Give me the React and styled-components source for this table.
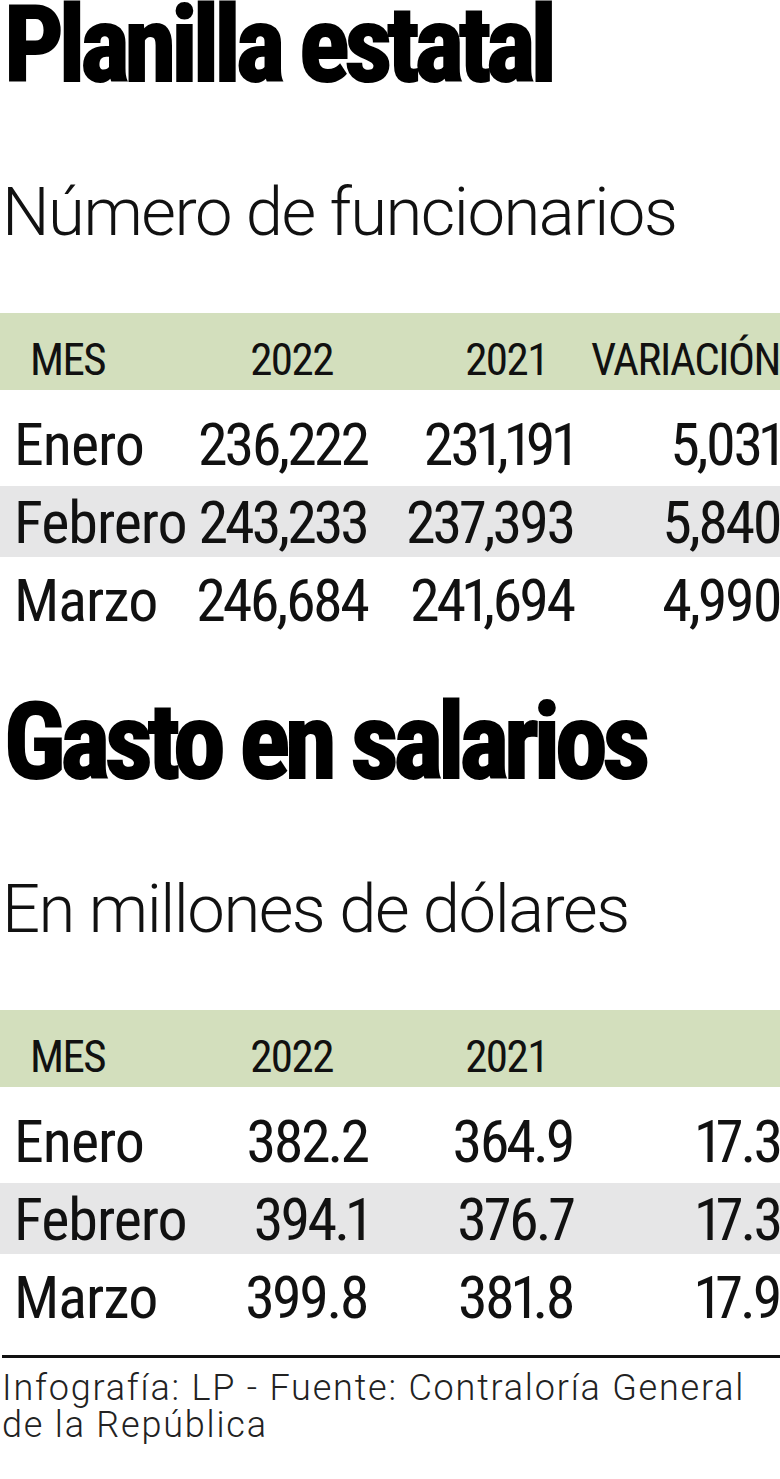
import styled, { createGlobalStyle } from 'styled-components'

const GlobalStyle = createGlobalStyle`
  html, body {
    margin: 0;
    padding: 0;
    background: #fff;
  }
  body {
    width: 780px;
    overflow: hidden;
    color: #111;
  }
`

const narrow = `"Roboto Condensed", "Open Sans", "Liberation Sans", sans-serif`

const funcionarios = {
  title: 'Planilla estatal',
  subtitle: 'Número de funcionarios',
  headers: ['MES', '2022', '2021', 'VARIACIÓN'],
  rows: [
    ['Enero', '236,222', '231,191', '5,031'],
    ['Febrero', '243,233', '237,393', '5,840'],
    ['Marzo', '246,684', '241,694', '4,990'],
  ],
}

const salarios = {
  title: 'Gasto en salarios',
  subtitle: 'En millones de dólares',
  headers: ['MES', '2022', '2021', ''],
  rows: [
    ['Enero', '382.2', '364.9', '17.3'],
    ['Febrero', '394.1', '376.7', '17.3'],
    ['Marzo', '399.8', '381.8', '17.9'],
  ],
}

// header cells sit a little off the number columns
const headerPad = ['0 0 0 30px', '0 34px 0 0', '0 25px 0 0', '0 0 0 0']

const App = () => {
  return (
    <Page>
      <GlobalStyle />
      <Section data={funcionarios} first />
      <Section data={salarios} />
      <Rule />
      <Source>Infografía: LP - Fuente: Contraloría General de la República</Source>
    </Page>
  )
}

const Section = ({ data, first }) => {
  return (
    <Block $first={first}>
      <Title>{data.title}</Title>
      <Subtitle>{data.subtitle}</Subtitle>
      <Table>
        <HeadRow>
          {data.headers.map((h, i) => (
            <HeadCell key={i} $left={i === 0} $pad={headerPad[i]}>{h}</HeadCell>
          ))}
        </HeadRow>
        {data.rows.map((row, r) => (
          <Row key={r} $shade={r === 1}>
            {row.map((val, i) => (
              <Cell key={i} $left={i === 0}>{val}</Cell>
            ))}
          </Row>
        ))}
      </Table>
    </Block>
  )
}

const Page = styled.main`
  width: 780px;
  display: flex;
  flex-direction: column;
`

const Block = styled.section`
  display: flex;
  flex-direction: column;
  margin-top: ${({ $first }) => ($first ? '0' : '62px')};
`

const Title = styled.h1`
  margin: 0;
  padding: 2px 0 0 4px;
  height: 90px;
  box-sizing: border-box;
  font-family: ${narrow};
  font-weight: 700;
  font-size: 105px;
  line-height: 88px;
  letter-spacing: -5px;
  -webkit-text-stroke: 2px #000;
  color: #000;
  white-space: nowrap;
`

const Subtitle = styled.h2`
  margin: 82px 0 0 0;
  padding-left: 2px;
  font-family: Roboto, "Liberation Sans", sans-serif;
  font-weight: 300;
  font-size: 67px;
  line-height: 80px;
  letter-spacing: -1.5px;
  color: #111;
  white-space: nowrap;
`

const Table = styled.div`
  margin-top: 61px;
  display: flex;
  flex-direction: column;
  gap: 7px;
`

const grid = `
  display: grid;
  grid-template-columns: 195px 172px 206px 207px;
  align-items: end;
`

const HeadRow = styled.div`
  ${grid}
  height: 77px;
  box-sizing: border-box;
  padding-bottom: 4px;
  margin-bottom: 11px;
  background: #d3dfbd;
`

const HeadCell = styled.div`
  font-family: ${narrow};
  font-size: 45px;
  line-height: 52px;
  letter-spacing: -1.5px;
  text-align: ${({ $left }) => ($left ? 'left' : 'right')};
  padding: ${({ $pad }) => $pad};
  white-space: nowrap;
`

const Row = styled.div`
  ${grid}
  height: 71px;
  box-sizing: border-box;
  padding-top: 3px;
  background: ${({ $shade }) => ($shade ? '#e6e6e7' : 'transparent')};
`

const Cell = styled.div`
  font-family: ${narrow};
  font-size: 60px;
  line-height: 68px;
  font-variant-numeric: proportional-nums;
  letter-spacing: ${({ $left }) => ($left ? '-1px' : '-3px')};
  text-align: ${({ $left }) => ($left ? 'left' : 'right')};
  padding-left: ${({ $left }) => ($left ? '14px' : '0')};
  white-space: nowrap;
`

const Rule = styled.hr`
  margin: 23px 0 0 2px;
  border: none;
  height: 3px;
  background: #111;
`

const Source = styled.p`
  margin: 12px 0 0 0;
  padding-left: 2px;
  width: 760px;
  font-family: Roboto, "Liberation Sans", sans-serif;
  font-weight: 300;
  font-size: 36px;
  line-height: 37px;
  letter-spacing: 1.8px;
  color: #222;
`

export default App
